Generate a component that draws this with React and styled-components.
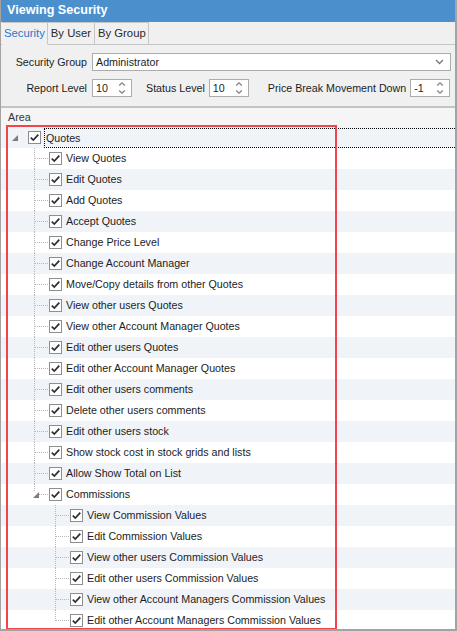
import styled, { createGlobalStyle } from "styled-components";

const GlobalStyle = createGlobalStyle`
  html, body {
    margin: 0;
    padding: 0;
    background: #ffffff;
  }
  body {
    font-family: "Liberation Sans", Arial, sans-serif;
  }
`;

const tree = [
  { label: "Quotes", level: 0, expander: true, selected: true },
  { label: "View Quotes", level: 1 },
  { label: "Edit Quotes", level: 1 },
  { label: "Add Quotes", level: 1 },
  { label: "Accept Quotes", level: 1 },
  { label: "Change Price Level", level: 1 },
  { label: "Change Account Manager", level: 1 },
  { label: "Move/Copy details from other Quotes", level: 1 },
  { label: "View other users Quotes", level: 1 },
  { label: "View other Account Manager Quotes", level: 1 },
  { label: "Edit other users Quotes", level: 1 },
  { label: "Edit other Account Manager Quotes", level: 1 },
  { label: "Edit other users comments", level: 1 },
  { label: "Delete other users comments", level: 1 },
  { label: "Edit other users stock", level: 1 },
  { label: "Show stock cost in stock grids and lists", level: 1 },
  { label: "Allow Show Total on List", level: 1 },
  { label: "Commissions", level: 1, expander: true, last: true },
  { label: "View Commission Values", level: 2 },
  { label: "Edit Commission Values", level: 2 },
  { label: "View other users Commission Values", level: 2 },
  { label: "Edit other users Commission Values", level: 2 },
  { label: "View other Account Managers Commission Values", level: 2 },
  { label: "Edit other Account Managers Commission Values", level: 2, last: true },
];

export default function App() {
  return (
    <>
      <GlobalStyle />
      <Window>
        <TitleBar>Viewing Security</TitleBar>
        <TabStrip>
          <Tab $active>Security</Tab>
          <Tab>By User</Tab>
          <Tab>By Group</Tab>
        </TabStrip>
        <FormPanel>
          <FormRow>
            <Label>Security Group</Label>
            <Combo>
              <span>Administrator</span>
              <svg width="9" height="6" viewBox="0 0 9 6">
                <path d="M1 1 L4.5 4.5 L8 1" fill="none" stroke="#7a7a7a" strokeWidth="1.4" />
              </svg>
            </Combo>
          </FormRow>
          <FormRow>
            <Label>Report Level</Label>
            <Spinner value="10" />
            <InlineLabel $gap={14}>Status Level</InlineLabel>
            <Spinner value="10" />
            <InlineLabel $gap={19}>Price Break Movement Down</InlineLabel>
            <Spinner value="-1" />
          </FormRow>
        </FormPanel>
        <TreePanel>
          <Header>Area</Header>
          {tree.map((item, i) => (
            <TreeRow key={item.label} $level={item.level} $alt={i % 2 === 0} $last={item.last}>
              {item.expander && <Expander level={item.level} />}
              <Check />
              <RowText $selected={item.selected}>{item.label}</RowText>
            </TreeRow>
          ))}
          <Highlight />
        </TreePanel>
      </Window>
    </>
  );
}

const Spinner = ({ value }) => (
  <SpinBox>
    <span>{value}</span>
    <svg width="8" height="14" viewBox="0 0 8 14">
      <path d="M1.2 4.5 L4 1.8 L6.8 4.5" fill="none" stroke="#808080" strokeWidth="1.2" />
      <path d="M1.2 9.5 L4 12.2 L6.8 9.5" fill="none" stroke="#808080" strokeWidth="1.2" />
    </svg>
  </SpinBox>
);

const Check = () => (
  <CheckBox>
    <svg width="11" height="11" viewBox="0 0 11 11">
      <path d="M1.8 5.6 L4.3 8.1 L9.3 2.6" fill="none" stroke="#2e2e2e" strokeWidth="1.7" />
    </svg>
  </CheckBox>
);

const Expander = ({ level }) => (
  <ExpandIcon $level={level}>
    <svg width="6" height="6" viewBox="0 0 6 6">
      <path d="M6 0 L6 6 L0 6 Z" fill="#7c7c7c" />
    </svg>
  </ExpandIcon>
);

const Window = styled.div`
  position: relative;
  width: 457px;
  height: 631px;
  box-sizing: border-box;
  border: 1px solid #a3a3a3;
  border-right-width: 2px;
  border-bottom-width: 2px;
  border-top: none;
  display: flex;
  flex-direction: column;
  overflow: hidden;
  background: #f0f0f0;
  font-size: 10.7px;
  color: #1c1c24;
`;

const TitleBar = styled.div`
  height: 22px;
  margin: 0 -2px 0 -1px;
  padding-left: 7px;
  background: #4b8fcd;
  color: #ffffff;
  font-weight: bold;
  font-size: 12.6px;
  line-height: 21px;
  flex-shrink: 0;
`;

const TabStrip = styled.div`
  display: flex;
  align-items: flex-end;
  height: 22px;
  padding-left: 1px;
  border-bottom: 1px solid #c6c6c6;
  flex-shrink: 0;
`;

const Tab = styled.div`
  height: 21px;
  line-height: 20px;
  padding: 0 3px;
  margin-bottom: ${(p) => (p.$active ? "-1px" : "0")};
  border: 1px solid #c6c6c6;
  border-bottom: ${(p) => (p.$active ? "1px solid #f0f0f0" : "none")};
  border-left: ${(p) => (p.$active ? "none" : "1px solid #c6c6c6")};
  margin-left: -1px;
  background: #f0f0f0;
  color: ${(p) => (p.$active ? "#2a78c8" : "#2a2a2a")};
  font-size: 11.3px;
  &:first-child {
    margin-left: 0;
    padding-left: 2px;
    padding-right: 2px;
  }
  &:last-child {
    padding-right: 2px;
  }
`;

const FormPanel = styled.div`
  display: flex;
  flex-direction: column;
  gap: 8px;
  padding: 8px 0 9px;
  flex-shrink: 0;
`;

const FormRow = styled.div`
  display: flex;
  align-items: center;
  height: 18px;
`;

const Label = styled.div`
  width: 86px;
  margin-right: 5px;
  text-align: right;
  white-space: nowrap;
`;

const InlineLabel = styled.div`
  margin-left: ${(p) => p.$gap}px;
  margin-right: 4px;
  white-space: nowrap;
`;

const Combo = styled.div`
  width: 359px;
  height: 18px;
  box-sizing: border-box;
  border: 1px solid #acacac;
  background: #ffffff;
  display: flex;
  align-items: center;
  justify-content: space-between;
  padding: 0 6px 0 3px;
`;

const SpinBox = styled.div`
  width: 40px;
  height: 18px;
  box-sizing: border-box;
  border: 1px solid #acacac;
  background: #ffffff;
  display: flex;
  align-items: center;
  justify-content: space-between;
  padding: 0 5px 0 3px;
`;

const TreePanel = styled.div`
  position: relative;
  flex: 1;
  background: #ffffff;
  border-top: 2px solid #c4c4c4;
`;

const Header = styled.div`
  height: 19px;
  line-height: 19px;
  padding-left: 7px;
  background: #f5f5f5;
  color: #333333;
`;

const TreeRow = styled.div`
  position: relative;
  height: 21px;
  display: flex;
  align-items: center;
  padding-left: ${(p) => 27 + p.$level * 21}px;
  background: ${(p) => (p.$alt ? "#f0f4f9" : "#ffffff")};
  ${(p) =>
    p.$level > 0 &&
    `
    &::before {
      content: "";
      position: absolute;
      left: ${33 + (p.$level - 1) * 21}px;
      top: 0;
      height: ${p.$last ? "11px" : "21px"};
      border-left: 1px dotted #b8b8b8;
    }
    &::after {
      content: "";
      position: absolute;
      left: ${34 + (p.$level - 1) * 21}px;
      top: 10px;
      width: 13px;
      border-top: 1px dotted #b8b8b8;
    }
  `}
`;

const ExpandIcon = styled.span`
  position: absolute;
  left: ${(p) => 11 + p.$level * 21}px;
  top: 8px;
  width: 6px;
  height: 6px;
  display: flex;
  z-index: 1;
  background: inherit;
`;

const CheckBox = styled.span`
  position: relative;
  width: 13px;
  height: 13px;
  box-sizing: border-box;
  border: 1px solid #8e8e8e;
  background: #ffffff;
  display: flex;
  align-items: center;
  justify-content: center;
  flex-shrink: 0;
`;

const RowText = styled.span`
  margin-left: 3px;
  padding: 0 1px;
  height: 20px;
  line-height: 19px;
  box-sizing: border-box;
  white-space: nowrap;
  ${(p) =>
    p.$selected &&
    `
    flex: 1;
    border-top: 1px dotted #000;
    border-bottom: 1px dotted #000;
    border-left: 1px dotted #000;
  `}
`;

const Highlight = styled.div`
  position: absolute;
  left: 5px;
  top: 17px;
  width: 331px;
  height: 505px;
  box-sizing: border-box;
  border: 2px solid #f2444a;
  pointer-events: none;
`;
